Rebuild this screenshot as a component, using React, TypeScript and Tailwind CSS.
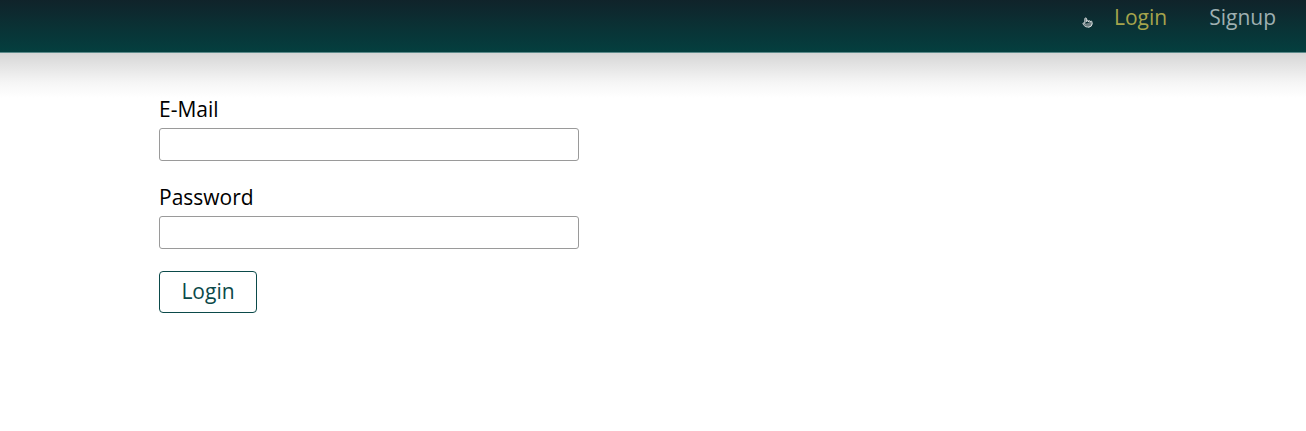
import { Pointer } from 'lucide-react'

const font = { fontFamily: '"Open Sans", "Noto Sans", sans-serif' }

function Field({ label, type }: { label: string; type: string }) {
  return (
    <div className="flex flex-col">
      <label className="text-[21px] leading-[28px] text-black mb-[5px]">{label}</label>
      <input
        type={type}
        className="w-[420px] h-[33px] border border-[#9a9a9a] rounded-[3px] bg-white px-2 outline-none"
      />
    </div>
  )
}

export default function App() {
  return (
    <div className="min-h-[431px] bg-white" style={font}>
      <header className="h-[53px] flex items-start justify-end pr-[30px] bg-[linear-gradient(to_bottom,#10232a,#043f3f)] border-b border-[#5d8a8a]">
        <div className="relative flex items-center gap-[42px] pt-[3px]">
          <Pointer className="absolute -left-[32px] top-[17px] w-[11px] h-[11px] text-white fill-[#6d7d80]" strokeWidth={1.5} />
          <a className="text-[21px] leading-[28px] text-[#a5a44c]">Login</a>
          <a className="text-[21px] leading-[28px] text-[#9fb0b1]">Signup</a>
        </div>
      </header>
      <main className="bg-[linear-gradient(to_bottom,#d6d6d6,#f6f6f6_30px,#ffffff_45px)] pl-[159px] pt-[42px] pb-[100px]">
        <form className="flex flex-col gap-[22px]" onSubmit={(e) => e.preventDefault()}>
          <Field label="E-Mail" type="email" />
          <Field label="Password" type="password" />
          <div>
            <button
              type="submit"
              className="w-[98px] h-[42px] border-[1.5px] border-[#0b4a4a] rounded-[4px] text-[21px] text-[#0b4a4a] bg-white"
            >
              Login
            </button>
          </div>
        </form>
      </main>
    </div>
  )
}
